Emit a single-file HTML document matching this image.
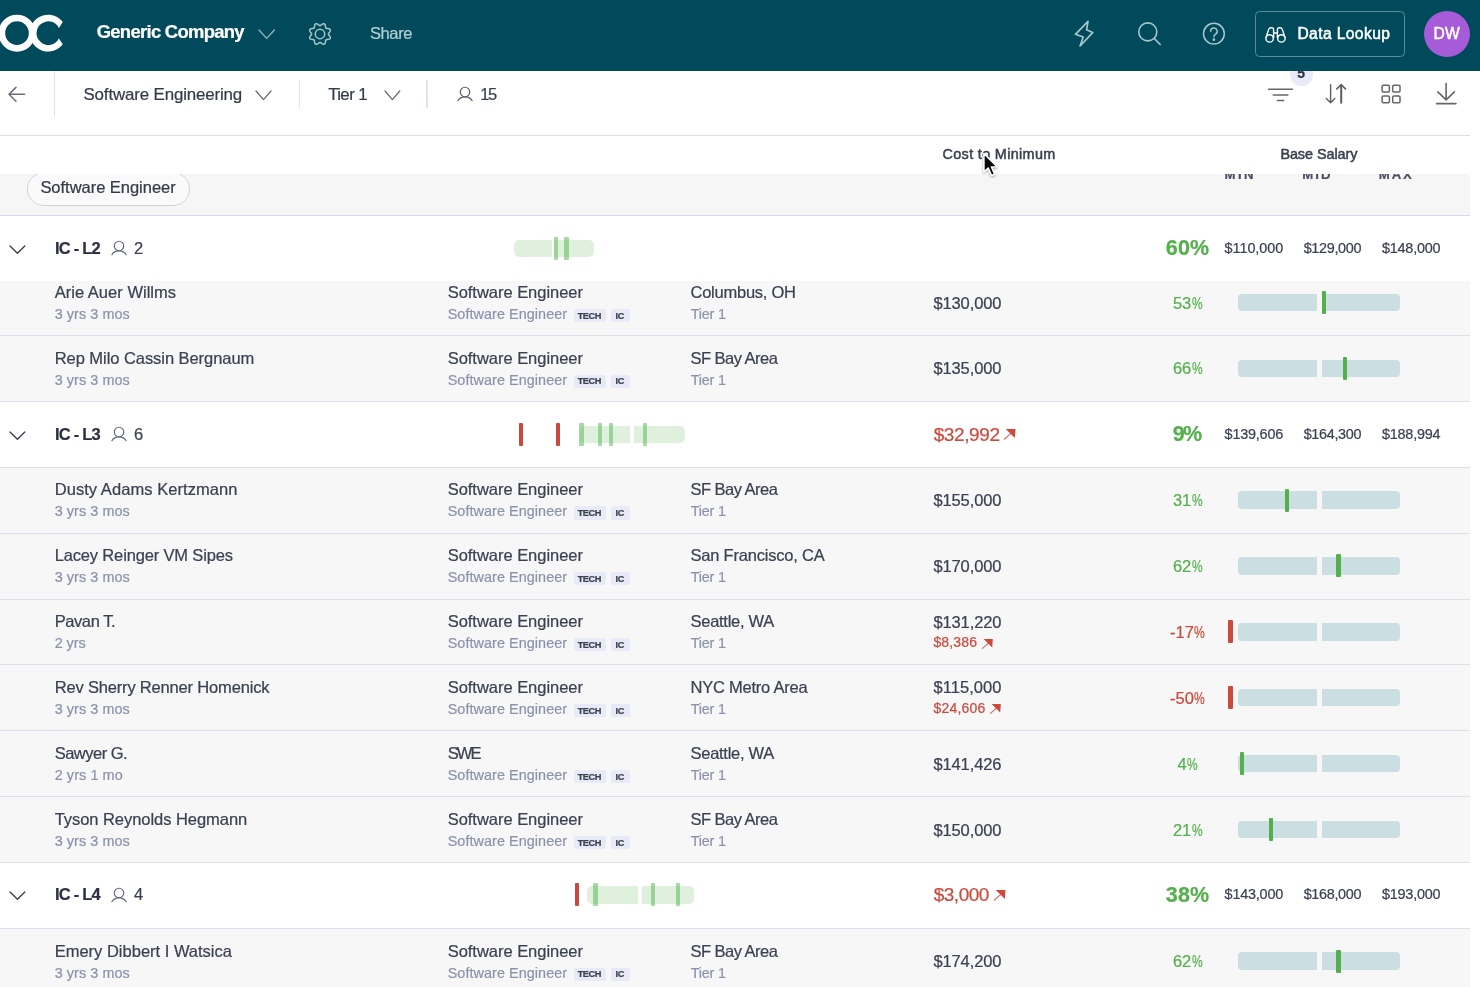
<!DOCTYPE html>
<html lang="en"><head><meta charset="utf-8"><title>Compensation bands</title>
<style>
html,body{margin:0;padding:0}
body{width:1480px;height:987px;overflow:hidden;background:#fff;position:relative;
 font-family:"Liberation Sans",sans-serif;color:#3a4151}
.t{position:absolute;white-space:nowrap;filter:blur(.3px);-webkit-text-stroke:.22px currentColor}
.pc{display:inline-block;font-style:normal;transform-origin:0 50%}
.a{position:absolute;display:block;overflow:visible}
.row,.grp{position:absolute;left:0;width:1470px;height:66px;box-sizing:border-box;border-bottom:1px solid #dde1ee}
.row{background:#f7f7f7}
.grp{background:#fff}
.grp.nb{border-bottom:0}
.tag{position:absolute;height:13.2px;background:#e8ebf7;border-radius:2px}
.bar{position:absolute;height:17.6px;background:#cbdee2}
.bl{left:1238.4px;width:78.6px;border-radius:4px 0 0 4px}
.br{left:1321.6px;width:78.6px;border-radius:0 4px 4px 0}
.mk{position:absolute;width:4.4px;height:23px;background:#54b04c;border-radius:1px}
.mk.neg{background:#cb4a3c;width:5px}
.rg{position:absolute;height:17.4px;background:#dff0dc}
.rt{position:absolute;width:4.1px;height:23.2px;background:#c94a3c;border-radius:1px}
.gt{position:absolute;width:4.4px;height:23.2px;background:rgba(96,188,96,.56);border-radius:1px}
#topbar{position:absolute;left:0;top:0;width:1480px;height:71px;background:#004a5b}
#toolbar{position:absolute;left:0;top:71px;width:1470px;height:64px;background:#fff;border-bottom:1px solid #dde1ee}
#thead{position:absolute;left:0;top:136px;width:1470px;height:38px;background:#fff}
#band{position:absolute;left:0;top:174px;width:1470px;height:42px;box-sizing:border-box;background:#f6f6f7;border-bottom:1px solid #d3d9e8;overflow:hidden}
.vd{position:absolute;width:1.4px;background:#dfe3f1}
.chip{position:absolute;left:27.2px;top:-2px;width:162.4px;height:33.7px;box-sizing:border-box;border:1px solid #d2d3d6;border-radius:17px;background:#fafafa}
.btn{position:absolute;left:1255.4px;top:11.2px;width:149.6px;height:45.4px;box-sizing:border-box;border:1px solid #5b8b97;border-radius:4.5px}
.av{position:absolute;left:1423.5px;top:10.6px;width:46.2px;height:46.2px;border-radius:50%;background:#a65bd9}
.badge{position:absolute;left:1289.6px;top:62.4px;width:23.4px;height:23.4px;border-radius:50%;background:#e8eaf7}
</style></head>
<body>
<main id="table"><div class="r"><div class="row" style="top:270px;height:66px"></div>
<span class="t" style="left:54.7px;top:283px;font-size:16.5px;line-height:18px;letter-spacing:0.025px;">Arie Auer Willms</span>
<span class="t" style="left:54.7px;top:306px;font-size:14.4px;line-height:16px;color:#8b93ab;letter-spacing:0.063px;">3 yrs 3 mos</span>
<span class="t" style="left:447.7px;top:283px;font-size:16.5px;line-height:18px;letter-spacing:-0.028px;">Software Engineer</span>
<span class="t" style="left:447.7px;top:306px;font-size:14.4px;line-height:16px;color:#8b93ab;letter-spacing:0.063px;">Software Engineer</span>
<span class="tag" style="left:573.5px;top:308.7px;width:32.7px"></span>
<span class="t" style="left:577.7px;top:311px;font-size:9.2px;line-height:10px;font-weight:700;letter-spacing:-0.437px;">TECH</span>
<span class="tag" style="left:610.5px;top:308.7px;width:19px"></span>
<span class="t" style="left:615.5px;top:311px;font-size:9.2px;line-height:10px;font-weight:700;letter-spacing:-0.288px;">IC</span>
<span class="t" style="left:690.5px;top:283px;font-size:16.5px;line-height:18px;letter-spacing:-0.246px;">Columbus, OH</span>
<span class="t" style="left:690.7px;top:306px;font-size:14.4px;line-height:16px;color:#8b93ab;letter-spacing:-0.210px;">Tier 1</span>
<span class="t" style="left:933.4px;top:294px;font-size:16.5px;line-height:18px;letter-spacing:-0.103px;">$130,000</span>
<span class="t" style="left:1172.9px;top:294px;font-size:16.5px;line-height:18px;color:#54b04c;">53<i class="pc" style="margin-left:0.4px;transform:scaleX(0.726)">%</i></span>
<span class="bar bl" style="top:293.6px"></span>
<span class="bar br" style="top:293.6px"></span>
<span class="mk" style="left:1321.9px;top:290.9px"></span>
</div>
<div class="r"><div class="row" style="top:336px;height:66px"></div>
<span class="t" style="left:54.7px;top:349px;font-size:16.5px;line-height:18px;letter-spacing:-0.054px;">Rep Milo Cassin Bergnaum</span>
<span class="t" style="left:54.7px;top:372px;font-size:14.4px;line-height:16px;color:#8b93ab;letter-spacing:0.063px;">3 yrs 3 mos</span>
<span class="t" style="left:447.7px;top:349px;font-size:16.5px;line-height:18px;letter-spacing:-0.028px;">Software Engineer</span>
<span class="t" style="left:447.7px;top:372px;font-size:14.4px;line-height:16px;color:#8b93ab;letter-spacing:0.063px;">Software Engineer</span>
<span class="tag" style="left:573.5px;top:374.6px;width:32.7px"></span>
<span class="t" style="left:577.7px;top:376px;font-size:9.2px;line-height:10px;font-weight:700;letter-spacing:-0.437px;">TECH</span>
<span class="tag" style="left:610.5px;top:374.6px;width:19px"></span>
<span class="t" style="left:615.5px;top:376px;font-size:9.2px;line-height:10px;font-weight:700;letter-spacing:-0.288px;">IC</span>
<span class="t" style="left:690.5px;top:349px;font-size:16.5px;line-height:18px;letter-spacing:-0.524px;">SF Bay Area</span>
<span class="t" style="left:690.7px;top:372px;font-size:14.4px;line-height:16px;color:#8b93ab;letter-spacing:-0.210px;">Tier 1</span>
<span class="t" style="left:933.4px;top:359px;font-size:16.5px;line-height:18px;letter-spacing:-0.103px;">$135,000</span>
<span class="t" style="left:1172.9px;top:359px;font-size:16.5px;line-height:18px;color:#54b04c;">66<i class="pc" style="margin-left:0.4px;transform:scaleX(0.726)">%</i></span>
<span class="bar bl" style="top:359.5px"></span>
<span class="bar br" style="top:359.5px"></span>
<span class="mk" style="left:1342.9px;top:356.8px"></span>
</div>
<div class="r g"><div class="grp" style="top:402px;height:66px"></div>
<svg class="a" style="left:7.9px;top:429.7px" width="18.8" height="11.3" viewBox="-2 -2 18.8 11.3"><path d="M0 0 L7.40 7.30 L14.80 0" fill="none" stroke="#3a4151" stroke-width="1.4" stroke-linecap="round" stroke-linejoin="round"/></svg>
<span class="t" style="left:54.9px;top:425px;font-size:16.5px;line-height:18px;font-weight:700;color:#2b3140;letter-spacing:-0.753px;">IC - L3</span>
<svg class="a" style="left:110.2px;top:424.3px" width="18" height="19" viewBox="110.20 424.28 18 19" fill="none" stroke="#666c7a" stroke-width="1.2" stroke-linecap="round"><circle cx="119.20" cy="432.28" r="4.75"/><path d="M112.10 441.08 Q114.20 437.18 119.20 437.18 Q124.20 437.18 126.30 441.08"/></svg>
<span class="t" style="left:133.9px;top:425px;font-size:16.5px;line-height:18px;">6</span>
<span class="t" style="left:933.7px;top:424px;font-size:19px;line-height:21px;color:#cb4a3c;letter-spacing:-0.397px;">$32,992</span>
<svg class="a" style="left:1004.3px;top:429.4px" width="11.5" height="10.4" viewBox="0 0 11.5 10.4"><path d="M1.7 0 L11.5 0 L10.9 9.1 Z" fill="#cb4a3c"/><path d="M0.5 10 L6.9 4.4" stroke="#cb4a3c" stroke-width="1.2" stroke-linecap="round" fill="none" opacity=".8"/></svg>
<span class="t" style="left:1172.7px;top:422px;font-size:21.5px;line-height:24px;font-weight:700;color:#54b04c;letter-spacing:-1.674px;">9%</span>
<span class="t" style="left:1224.6px;top:426px;font-size:14.4px;line-height:16px;letter-spacing:-0.203px;">$139,606</span>
<span class="t" style="left:1303.7px;top:426px;font-size:14.4px;line-height:16px;letter-spacing:-0.317px;">$164,300</span>
<span class="t" style="left:1381.9px;top:426px;font-size:14.4px;line-height:16px;letter-spacing:-0.189px;">$188,994</span>
<span class="rg" style="left:579.7px;top:425.8px;width:50.0px;border-radius:5px 0 0 5px"></span>
<span class="rg" style="left:634.2px;top:425.8px;width:50.7px;border-radius:0 5px 5px 0"></span>
<span class="rt" style="left:519.2px;top:422.8px"></span>
<span class="rt" style="left:556.4px;top:422.8px"></span>
<span class="gt" style="left:579.2px;top:422.8px"></span>
<span class="gt" style="left:598.0px;top:422.8px"></span>
<span class="gt" style="left:608.8px;top:422.8px"></span>
<span class="gt" style="left:642.6px;top:422.8px"></span>
</div>
<div class="r"><div class="row" style="top:468px;height:66px"></div>
<span class="t" style="left:54.7px;top:480px;font-size:16.5px;line-height:18px;letter-spacing:0.056px;">Dusty Adams Kertzmann</span>
<span class="t" style="left:54.7px;top:503px;font-size:14.4px;line-height:16px;color:#8b93ab;letter-spacing:0.063px;">3 yrs 3 mos</span>
<span class="t" style="left:447.7px;top:480px;font-size:16.5px;line-height:18px;letter-spacing:-0.028px;">Software Engineer</span>
<span class="t" style="left:447.7px;top:503px;font-size:14.4px;line-height:16px;color:#8b93ab;letter-spacing:0.063px;">Software Engineer</span>
<span class="tag" style="left:573.5px;top:506.4px;width:32.7px"></span>
<span class="t" style="left:577.7px;top:508px;font-size:9.2px;line-height:10px;font-weight:700;letter-spacing:-0.437px;">TECH</span>
<span class="tag" style="left:610.5px;top:506.4px;width:19px"></span>
<span class="t" style="left:615.5px;top:508px;font-size:9.2px;line-height:10px;font-weight:700;letter-spacing:-0.288px;">IC</span>
<span class="t" style="left:690.5px;top:480px;font-size:16.5px;line-height:18px;letter-spacing:-0.524px;">SF Bay Area</span>
<span class="t" style="left:690.7px;top:503px;font-size:14.4px;line-height:16px;color:#8b93ab;letter-spacing:-0.210px;">Tier 1</span>
<span class="t" style="left:933.4px;top:491px;font-size:16.5px;line-height:18px;letter-spacing:-0.103px;">$155,000</span>
<span class="t" style="left:1172.9px;top:491px;font-size:16.5px;line-height:18px;color:#54b04c;">31<i class="pc" style="margin-left:0.4px;transform:scaleX(0.726)">%</i></span>
<span class="bar bl" style="top:491.3px"></span>
<span class="bar br" style="top:491.3px"></span>
<span class="mk" style="left:1285.1px;top:488.6px"></span>
</div>
<div class="r"><div class="row" style="top:534px;height:66px"></div>
<span class="t" style="left:54.7px;top:546px;font-size:16.5px;line-height:18px;letter-spacing:-0.157px;">Lacey Reinger VM Sipes</span>
<span class="t" style="left:54.7px;top:569px;font-size:14.4px;line-height:16px;color:#8b93ab;letter-spacing:0.063px;">3 yrs 3 mos</span>
<span class="t" style="left:447.7px;top:546px;font-size:16.5px;line-height:18px;letter-spacing:-0.028px;">Software Engineer</span>
<span class="t" style="left:447.7px;top:569px;font-size:14.4px;line-height:16px;color:#8b93ab;letter-spacing:0.063px;">Software Engineer</span>
<span class="tag" style="left:573.5px;top:572.2px;width:32.7px"></span>
<span class="t" style="left:577.7px;top:574px;font-size:9.2px;line-height:10px;font-weight:700;letter-spacing:-0.437px;">TECH</span>
<span class="tag" style="left:610.5px;top:572.2px;width:19px"></span>
<span class="t" style="left:615.5px;top:574px;font-size:9.2px;line-height:10px;font-weight:700;letter-spacing:-0.288px;">IC</span>
<span class="t" style="left:690.5px;top:546px;font-size:16.5px;line-height:18px;letter-spacing:-0.209px;">San Francisco, CA</span>
<span class="t" style="left:690.7px;top:569px;font-size:14.4px;line-height:16px;color:#8b93ab;letter-spacing:-0.210px;">Tier 1</span>
<span class="t" style="left:933.4px;top:557px;font-size:16.5px;line-height:18px;letter-spacing:-0.103px;">$170,000</span>
<span class="t" style="left:1172.9px;top:557px;font-size:16.5px;line-height:18px;color:#54b04c;">62<i class="pc" style="margin-left:0.4px;transform:scaleX(0.726)">%</i></span>
<span class="bar bl" style="top:557.1px"></span>
<span class="bar br" style="top:557.1px"></span>
<span class="mk" style="left:1336.4px;top:554.4px"></span>
</div>
<div class="r"><div class="row" style="top:600px;height:65px"></div>
<span class="t" style="left:54.7px;top:612px;font-size:16.5px;line-height:18px;letter-spacing:-0.415px;">Pavan T.</span>
<span class="t" style="left:54.7px;top:635px;font-size:14.4px;line-height:16px;color:#8b93ab;letter-spacing:-0.071px;">2 yrs</span>
<span class="t" style="left:447.7px;top:612px;font-size:16.5px;line-height:18px;letter-spacing:-0.028px;">Software Engineer</span>
<span class="t" style="left:447.7px;top:635px;font-size:14.4px;line-height:16px;color:#8b93ab;letter-spacing:0.063px;">Software Engineer</span>
<span class="tag" style="left:573.5px;top:638.1px;width:32.7px"></span>
<span class="t" style="left:577.7px;top:640px;font-size:9.2px;line-height:10px;font-weight:700;letter-spacing:-0.437px;">TECH</span>
<span class="tag" style="left:610.5px;top:638.1px;width:19px"></span>
<span class="t" style="left:615.5px;top:640px;font-size:9.2px;line-height:10px;font-weight:700;letter-spacing:-0.288px;">IC</span>
<span class="t" style="left:690.5px;top:612px;font-size:16.5px;line-height:18px;letter-spacing:-0.270px;">Seattle, WA</span>
<span class="t" style="left:690.7px;top:635px;font-size:14.4px;line-height:16px;color:#8b93ab;letter-spacing:-0.210px;">Tier 1</span>
<span class="t" style="left:933.4px;top:613px;font-size:16.5px;line-height:18px;letter-spacing:-0.103px;">$131,220</span>
<span class="t" style="left:933.4px;top:634px;font-size:14.0px;line-height:16px;color:#cb4a3c;letter-spacing:0.156px;">$8,386</span>
<svg class="a" style="left:981.8px;top:638.5px" width="10.8" height="9.8" viewBox="0 0 11.5 10.4"><path d="M1.7 0 L11.5 0 L10.9 9.1 Z" fill="#cb4a3c"/><path d="M0.5 10 L6.9 4.4" stroke="#cb4a3c" stroke-width="1.2" stroke-linecap="round" fill="none" opacity=".8"/></svg>
<span class="t" style="left:1170.1px;top:623px;font-size:16.5px;line-height:18px;color:#cb4a3c;">-17<i class="pc" style="margin-left:0.4px;transform:scaleX(0.733)">%</i></span>
<span class="bar bl" style="top:623.0px"></span>
<span class="bar br" style="top:623.0px"></span>
<span class="mk neg" style="left:1228.4px;top:620.3px"></span>
</div>
<div class="r"><div class="row" style="top:665px;height:66px"></div>
<span class="t" style="left:54.7px;top:678px;font-size:16.5px;line-height:18px;letter-spacing:-0.175px;">Rev Sherry Renner Homenick</span>
<span class="t" style="left:54.7px;top:701px;font-size:14.4px;line-height:16px;color:#8b93ab;letter-spacing:0.063px;">3 yrs 3 mos</span>
<span class="t" style="left:447.7px;top:678px;font-size:16.5px;line-height:18px;letter-spacing:-0.028px;">Software Engineer</span>
<span class="t" style="left:447.7px;top:701px;font-size:14.4px;line-height:16px;color:#8b93ab;letter-spacing:0.063px;">Software Engineer</span>
<span class="tag" style="left:573.5px;top:704.0px;width:32.7px"></span>
<span class="t" style="left:577.7px;top:706px;font-size:9.2px;line-height:10px;font-weight:700;letter-spacing:-0.437px;">TECH</span>
<span class="tag" style="left:610.5px;top:704.0px;width:19px"></span>
<span class="t" style="left:615.5px;top:706px;font-size:9.2px;line-height:10px;font-weight:700;letter-spacing:-0.288px;">IC</span>
<span class="t" style="left:690.5px;top:678px;font-size:16.5px;line-height:18px;letter-spacing:-0.226px;">NYC Metro Area</span>
<span class="t" style="left:690.7px;top:701px;font-size:14.4px;line-height:16px;color:#8b93ab;letter-spacing:-0.210px;">Tier 1</span>
<span class="t" style="left:933.4px;top:678px;font-size:16.5px;line-height:18px;letter-spacing:0.072px;">$115,000</span>
<span class="t" style="left:933.4px;top:700px;font-size:14.0px;line-height:16px;color:#cb4a3c;letter-spacing:0.232px;">$24,606</span>
<svg class="a" style="left:990.2px;top:704.4px" width="10.8" height="9.8" viewBox="0 0 11.5 10.4"><path d="M1.7 0 L11.5 0 L10.9 9.1 Z" fill="#cb4a3c"/><path d="M0.5 10 L6.9 4.4" stroke="#cb4a3c" stroke-width="1.2" stroke-linecap="round" fill="none" opacity=".8"/></svg>
<span class="t" style="left:1170.1px;top:689px;font-size:16.5px;line-height:18px;color:#cb4a3c;">-50<i class="pc" style="margin-left:0.4px;transform:scaleX(0.733)">%</i></span>
<span class="bar bl" style="top:688.9px"></span>
<span class="bar br" style="top:688.9px"></span>
<span class="mk neg" style="left:1228.4px;top:686.2px"></span>
</div>
<div class="r"><div class="row" style="top:731px;height:66px"></div>
<span class="t" style="left:54.7px;top:744px;font-size:16.5px;line-height:18px;letter-spacing:-0.515px;">Sawyer G.</span>
<span class="t" style="left:54.7px;top:767px;font-size:14.4px;line-height:16px;color:#8b93ab;letter-spacing:0.092px;">2 yrs 1 mo</span>
<span class="t" style="left:447.7px;top:744px;font-size:16.5px;line-height:18px;letter-spacing:-1.892px;">SWE</span>
<span class="t" style="left:447.7px;top:767px;font-size:14.4px;line-height:16px;color:#8b93ab;letter-spacing:0.063px;">Software Engineer</span>
<span class="tag" style="left:573.5px;top:769.9px;width:32.7px"></span>
<span class="t" style="left:577.7px;top:772px;font-size:9.2px;line-height:10px;font-weight:700;letter-spacing:-0.437px;">TECH</span>
<span class="tag" style="left:610.5px;top:769.9px;width:19px"></span>
<span class="t" style="left:615.5px;top:772px;font-size:9.2px;line-height:10px;font-weight:700;letter-spacing:-0.288px;">IC</span>
<span class="t" style="left:690.5px;top:744px;font-size:16.5px;line-height:18px;letter-spacing:-0.270px;">Seattle, WA</span>
<span class="t" style="left:690.7px;top:767px;font-size:14.4px;line-height:16px;color:#8b93ab;letter-spacing:-0.210px;">Tier 1</span>
<span class="t" style="left:933.4px;top:755px;font-size:16.5px;line-height:18px;letter-spacing:-0.103px;">$141,426</span>
<span class="t" style="left:1177.5px;top:755px;font-size:16.5px;line-height:18px;color:#54b04c;">4<i class="pc" style="margin-left:0.4px;transform:scaleX(0.724)">%</i></span>
<span class="bar bl" style="top:754.8px"></span>
<span class="bar br" style="top:754.8px"></span>
<span class="mk" style="left:1240.1px;top:752.1px"></span>
</div>
<div class="r"><div class="row" style="top:797px;height:66px"></div>
<span class="t" style="left:54.7px;top:810px;font-size:16.5px;line-height:18px;letter-spacing:-0.049px;">Tyson Reynolds Hegmann</span>
<span class="t" style="left:54.7px;top:833px;font-size:14.4px;line-height:16px;color:#8b93ab;letter-spacing:0.063px;">3 yrs 3 mos</span>
<span class="t" style="left:447.7px;top:810px;font-size:16.5px;line-height:18px;letter-spacing:-0.028px;">Software Engineer</span>
<span class="t" style="left:447.7px;top:833px;font-size:14.4px;line-height:16px;color:#8b93ab;letter-spacing:0.063px;">Software Engineer</span>
<span class="tag" style="left:573.5px;top:835.8px;width:32.7px"></span>
<span class="t" style="left:577.7px;top:838px;font-size:9.2px;line-height:10px;font-weight:700;letter-spacing:-0.437px;">TECH</span>
<span class="tag" style="left:610.5px;top:835.8px;width:19px"></span>
<span class="t" style="left:615.5px;top:838px;font-size:9.2px;line-height:10px;font-weight:700;letter-spacing:-0.288px;">IC</span>
<span class="t" style="left:690.5px;top:810px;font-size:16.5px;line-height:18px;letter-spacing:-0.524px;">SF Bay Area</span>
<span class="t" style="left:690.7px;top:833px;font-size:14.4px;line-height:16px;color:#8b93ab;letter-spacing:-0.210px;">Tier 1</span>
<span class="t" style="left:933.4px;top:821px;font-size:16.5px;line-height:18px;letter-spacing:-0.103px;">$150,000</span>
<span class="t" style="left:1172.9px;top:821px;font-size:16.5px;line-height:18px;color:#54b04c;">21<i class="pc" style="margin-left:0.4px;transform:scaleX(0.726)">%</i></span>
<span class="bar bl" style="top:820.7px"></span>
<span class="bar br" style="top:820.7px"></span>
<span class="mk" style="left:1268.7px;top:818.0px"></span>
</div>
<div class="r g"><div class="grp" style="top:863px;height:66px"></div>
<svg class="a" style="left:7.9px;top:890.2px" width="18.8" height="11.3" viewBox="-2 -2 18.8 11.3"><path d="M0 0 L7.40 7.30 L14.80 0" fill="none" stroke="#3a4151" stroke-width="1.4" stroke-linecap="round" stroke-linejoin="round"/></svg>
<span class="t" style="left:54.9px;top:885px;font-size:16.5px;line-height:18px;font-weight:700;color:#2b3140;letter-spacing:-0.753px;">IC - L4</span>
<svg class="a" style="left:110.2px;top:884.8px" width="18" height="19" viewBox="110.20 884.84 18 19" fill="none" stroke="#666c7a" stroke-width="1.2" stroke-linecap="round"><circle cx="119.20" cy="892.84" r="4.75"/><path d="M112.10 901.64 Q114.20 897.74 119.20 897.74 Q124.20 897.74 126.30 901.64"/></svg>
<span class="t" style="left:133.9px;top:885px;font-size:16.5px;line-height:18px;">4</span>
<span class="t" style="left:933.7px;top:884px;font-size:19px;line-height:21px;color:#cb4a3c;letter-spacing:-0.483px;">$3,000</span>
<svg class="a" style="left:993.7px;top:889.9px" width="11.5" height="10.4" viewBox="0 0 11.5 10.4"><path d="M1.7 0 L11.5 0 L10.9 9.1 Z" fill="#cb4a3c"/><path d="M0.5 10 L6.9 4.4" stroke="#cb4a3c" stroke-width="1.2" stroke-linecap="round" fill="none" opacity=".8"/></svg>
<span class="t" style="left:1165.7px;top:883px;font-size:21.5px;line-height:24px;font-weight:700;color:#54b04c;letter-spacing:0.234px;">38%</span>
<span class="t" style="left:1224.6px;top:886px;font-size:14.4px;line-height:16px;letter-spacing:-0.203px;">$143,000</span>
<span class="t" style="left:1303.7px;top:886px;font-size:14.4px;line-height:16px;letter-spacing:-0.317px;">$168,000</span>
<span class="t" style="left:1381.9px;top:886px;font-size:14.4px;line-height:16px;letter-spacing:-0.189px;">$193,000</span>
<span class="rg" style="left:586.9px;top:886.3px;width:51.3px;border-radius:5px 0 0 5px"></span>
<span class="rg" style="left:642.2px;top:886.3px;width:52.0px;border-radius:0 5px 5px 0"></span>
<span class="rt" style="left:575.3px;top:883.3px"></span>
<span class="gt" style="left:593.4px;top:883.3px"></span>
<span class="gt" style="left:651.0px;top:883.3px"></span>
<span class="gt" style="left:676.0px;top:883.3px"></span>
</div>
<div class="r"><div class="row" style="top:929px;height:66px"></div>
<span class="t" style="left:54.7px;top:942px;font-size:16.5px;line-height:18px;">Emery Dibbert I Watsica</span>
<span class="t" style="left:54.7px;top:965px;font-size:14.4px;line-height:16px;color:#8b93ab;letter-spacing:0.063px;">3 yrs 3 mos</span>
<span class="t" style="left:447.7px;top:942px;font-size:16.5px;line-height:18px;letter-spacing:-0.028px;">Software Engineer</span>
<span class="t" style="left:447.7px;top:965px;font-size:14.4px;line-height:16px;color:#8b93ab;letter-spacing:0.063px;">Software Engineer</span>
<span class="tag" style="left:573.5px;top:967.5px;width:32.7px"></span>
<span class="t" style="left:577.7px;top:969px;font-size:9.2px;line-height:10px;font-weight:700;letter-spacing:-0.437px;">TECH</span>
<span class="tag" style="left:610.5px;top:967.5px;width:19px"></span>
<span class="t" style="left:615.5px;top:969px;font-size:9.2px;line-height:10px;font-weight:700;letter-spacing:-0.288px;">IC</span>
<span class="t" style="left:690.5px;top:942px;font-size:16.5px;line-height:18px;letter-spacing:-0.524px;">SF Bay Area</span>
<span class="t" style="left:690.7px;top:965px;font-size:14.4px;line-height:16px;color:#8b93ab;letter-spacing:-0.210px;">Tier 1</span>
<span class="t" style="left:933.4px;top:952px;font-size:16.5px;line-height:18px;letter-spacing:-0.103px;">$174,200</span>
<span class="t" style="left:1172.9px;top:952px;font-size:16.5px;line-height:18px;color:#54b04c;">62<i class="pc" style="margin-left:0.4px;transform:scaleX(0.726)">%</i></span>
<span class="bar bl" style="top:952.4px"></span>
<span class="bar br" style="top:952.4px"></span>
<span class="mk" style="left:1336.4px;top:949.7px"></span>
</div>
</main>
<section id="sticky"><div class="grp nb" style="top:216px;height:64.6px"></div>
<div class="r g"><svg class="a" style="left:7.9px;top:243.8px" width="18.8" height="11.3" viewBox="-2 -2 18.8 11.3"><path d="M0 0 L7.40 7.30 L14.80 0" fill="none" stroke="#3a4151" stroke-width="1.4" stroke-linecap="round" stroke-linejoin="round"/></svg>
<span class="t" style="left:54.9px;top:239px;font-size:16.5px;line-height:18px;font-weight:700;color:#2b3140;letter-spacing:-0.753px;">IC - L2</span>
<svg class="a" style="left:110.2px;top:238.4px" width="18" height="19" viewBox="110.20 238.40 18 19" fill="none" stroke="#666c7a" stroke-width="1.2" stroke-linecap="round"><circle cx="119.20" cy="246.40" r="4.75"/><path d="M112.10 255.20 Q114.20 251.30 119.20 251.30 Q124.20 251.30 126.30 255.20"/></svg>
<span class="t" style="left:133.9px;top:239px;font-size:16.5px;line-height:18px;">2</span>
<span class="t" style="left:1165.7px;top:236px;font-size:21.5px;line-height:24px;font-weight:700;color:#54b04c;letter-spacing:0.234px;">60%</span>
<span class="t" style="left:1224.6px;top:240px;font-size:14.4px;line-height:16px;letter-spacing:-0.050px;">$110,000</span>
<span class="t" style="left:1303.7px;top:240px;font-size:14.4px;line-height:16px;letter-spacing:-0.317px;">$129,000</span>
<span class="t" style="left:1381.9px;top:240px;font-size:14.4px;line-height:16px;letter-spacing:-0.189px;">$148,000</span>
<span class="rg" style="left:513.9px;top:239.9px;width:38.1px;border-radius:5px 0 0 5px"></span>
<span class="rg" style="left:553.8px;top:239.9px;width:39.8px;border-radius:0 5px 5px 0"></span>
<span class="gt" style="left:553.6px;top:236.9px"></span>
<span class="gt" style="left:564.4px;top:236.9px"></span>
</div>
<div id="band"><div class="chip"></div>
</div><span class="t" style="left:40.4px;top:178px;font-size:16.5px;line-height:18px;color:#333a48;letter-spacing:-0.028px;">Software Engineer</span>
<span class="t" style="left:1224.6px;top:167px;font-size:13.2px;line-height:15px;font-weight:700;color:#4a5060;letter-spacing:2.364px;">MIN</span>
<span class="t" style="left:1302.2px;top:167px;font-size:13.2px;line-height:15px;font-weight:700;color:#4a5060;letter-spacing:2.064px;">MID</span>
<span class="t" style="left:1378.8px;top:167px;font-size:13.2px;line-height:15px;font-weight:700;color:#4a5060;letter-spacing:1.898px;">MAX</span>
<div id="thead"></div>
<span class="t" style="left:942.5px;top:146px;font-size:14.4px;line-height:16px;color:#394050;letter-spacing:0.346px;-webkit-text-stroke:0.5px #394050;">Cost to Minimum</span>
<span class="t" style="left:1280.4px;top:146px;font-size:14.4px;line-height:16px;color:#394050;letter-spacing:-0.059px;-webkit-text-stroke:0.5px #394050;">Base Salary</span>
</section>
<nav id="filters"><div id="toolbar"></div>
<svg class="a" style="left:6px;top:84px" width="22" height="20" viewBox="6 84 22 20" fill="none" stroke="#6a6e78" stroke-width="1.5" stroke-linecap="round" stroke-linejoin="round"><path d="M24.6 94.3 H9.2 M16 87.4 L9 94.3 L16 101.2"/></svg>
<span class="vd" style="left:53.8px;top:71px;height:46px"></span>
<span class="t" style="left:83.5px;top:85px;font-size:16.9px;line-height:19px;color:#333a48;letter-spacing:-0.147px;">Software Engineering</span>
<svg class="a" style="left:254.2px;top:88.8px" width="19.0" height="12.6" viewBox="-2 -2 19.0 12.6"><path d="M0 0 L7.50 8.60 L15.00 0" fill="none" stroke="#666b76" stroke-width="1.3" stroke-linecap="round" stroke-linejoin="round"/></svg>
<span class="vd" style="left:298.6px;top:80px;height:28px"></span>
<span class="t" style="left:328.2px;top:85px;font-size:16.9px;line-height:19px;color:#333a48;letter-spacing:-0.630px;">Tier 1</span>
<svg class="a" style="left:382.8px;top:88.8px" width="18.8" height="12.6" viewBox="-2 -2 18.8 12.6"><path d="M0 0 L7.40 8.60 L14.80 0" fill="none" stroke="#666b76" stroke-width="1.3" stroke-linecap="round" stroke-linejoin="round"/></svg>
<span class="vd" style="left:426.4px;top:80px;height:28px"></span>
<svg class="a" style="left:456.3px;top:84.3px" width="18" height="19" viewBox="456.30 84.30 18 19" fill="none" stroke="#596070" stroke-width="1.2" stroke-linecap="round"><circle cx="465.30" cy="92.30" r="4.75"/><path d="M458.20 101.10 Q460.30 97.20 465.30 97.20 Q470.30 97.20 472.40 101.10"/></svg>
<span class="t" style="left:480.3px;top:85px;font-size:16.5px;line-height:18px;letter-spacing:-1.353px;">15</span>
<span class="badge"></span>
<span class="t" style="left:1297.3px;top:65px;font-size:14px;line-height:16px;font-weight:700;color:#2b3140;">5</span>
<svg class="a" style="left:1266px;top:86px" width="30" height="18" viewBox="1266 86 30 18" fill="none" stroke="#666" stroke-width="1.5" stroke-linecap="round"><path d="M1268.6 89.2 H1292.4 M1273.2 95 H1287.9 M1277.4 100.5 H1283.7"/></svg>
<svg class="a" style="left:1323px;top:82px" width="26" height="24" viewBox="1323 82 26 24" fill="none" stroke="#5f5f5f" stroke-linecap="round" stroke-linejoin="round"><path d="M1330.6 84.8 V102.6 M1326.3 98.6 L1330.6 102.8 L1334.8 98.6" stroke-width="1.4"/><path d="M1341.2 102.8 V85 " stroke-width="2"/><path d="M1336.8 88.9 L1341.2 84.6 L1345.5 88.9" stroke-width="1.5"/></svg>
<svg class="a" style="left:1379px;top:82px" width="24" height="24" viewBox="1379 82 24 24" fill="none" stroke="#666" stroke-width="1.5"><rect x="1382.1" y="85.2" width="7.3" height="6.8" rx="1.2"/><rect x="1392.7" y="85.2" width="7.3" height="6.8" rx="1.2"/><rect x="1382.1" y="95.9" width="7.3" height="6.8" rx="1.2"/><rect x="1392.7" y="95.9" width="7.3" height="6.8" rx="1.2"/></svg>
<svg class="a" style="left:1434px;top:81px" width="25" height="25" viewBox="1434 81 25 25" fill="none" stroke="#666" stroke-width="1.6" stroke-linecap="round" stroke-linejoin="round"><path d="M1446.1 83.6 V99.4 M1437.8 91.8 L1446.1 99.8 L1454.4 91.8 M1436.6 103.6 H1456"/></svg>
</nav>
<header><div id="topbar"></div>
<svg class="a" style="left:0;top:10px" width="70" height="48" viewBox="0 10 70 48"><circle cx="17" cy="33.15" r="15.15" fill="none" stroke="#fff" stroke-width="6.7"/><path d="M62.8 21.95 A18.45 18.45 0 1 0 62.8 44.35 L58.87 38.42 A11.8 11.8 0 1 1 58.87 27.88 Z" fill="#fff"/></svg>
<span class="t" style="left:96.7px;top:21px;font-size:18.4px;line-height:21px;font-weight:700;color:#fff;letter-spacing:-0.678px;">Generic Company</span>
<svg class="a" style="left:256.9px;top:28.4px" width="19.4" height="12.4" viewBox="-2 -2 19.4 12.4"><path d="M0 0 L7.70 8.40 L15.40 0" fill="none" stroke="#8db2bb" stroke-width="1.4" stroke-linecap="round" stroke-linejoin="round"/></svg>
<svg class="a" style="left:305.5px;top:19.7px" width="28" height="28" viewBox="305.50 19.70 28 28" fill="none" stroke="#a6c6cd" stroke-width="1.5" stroke-linejoin="round"><path d="M327.90 33.70 L328.01 34.15 L328.30 34.62 L328.72 35.16 L329.17 35.76 L329.57 36.40 L329.81 37.05 L329.84 37.67 L329.61 38.20 L329.16 38.62 L328.53 38.91 L327.80 39.09 L327.05 39.19 L326.38 39.27 L325.83 39.40 L325.44 39.64 L325.20 40.03 L325.07 40.58 L324.99 41.25 L324.89 42.00 L324.71 42.73 L324.42 43.36 L324.00 43.81 L323.47 44.04 L322.85 44.01 L322.20 43.77 L321.56 43.37 L320.96 42.92 L320.42 42.50 L319.95 42.21 L319.50 42.10 L319.05 42.21 L318.58 42.50 L318.04 42.92 L317.44 43.37 L316.80 43.77 L316.15 44.01 L315.53 44.04 L315.00 43.81 L314.58 43.36 L314.29 42.73 L314.11 42.00 L314.01 41.25 L313.93 40.58 L313.80 40.03 L313.56 39.64 L313.17 39.40 L312.62 39.27 L311.95 39.19 L311.20 39.09 L310.47 38.91 L309.84 38.62 L309.39 38.20 L309.16 37.67 L309.19 37.05 L309.43 36.40 L309.83 35.76 L310.28 35.16 L310.70 34.62 L310.99 34.15 L311.10 33.70 L310.99 33.25 L310.70 32.78 L310.28 32.24 L309.83 31.64 L309.43 31.00 L309.19 30.35 L309.16 29.73 L309.39 29.20 L309.84 28.78 L310.47 28.49 L311.20 28.31 L311.95 28.21 L312.62 28.13 L313.17 28.00 L313.56 27.76 L313.80 27.37 L313.93 26.82 L314.01 26.15 L314.11 25.40 L314.29 24.67 L314.58 24.04 L315.00 23.59 L315.53 23.36 L316.15 23.39 L316.80 23.63 L317.44 24.03 L318.04 24.48 L318.58 24.90 L319.05 25.19 L319.50 25.30 L319.95 25.19 L320.42 24.90 L320.96 24.48 L321.56 24.03 L322.20 23.63 L322.85 23.39 L323.47 23.36 L324.00 23.59 L324.42 24.04 L324.71 24.67 L324.89 25.40 L324.99 26.15 L325.07 26.82 L325.20 27.37 L325.44 27.76 L325.83 28.00 L326.38 28.13 L327.05 28.21 L327.80 28.31 L328.53 28.49 L329.16 28.78 L329.61 29.20 L329.84 29.73 L329.81 30.35 L329.57 31.00 L329.17 31.64 L328.72 32.24 L328.30 32.78 L328.01 33.25 Z"/><circle cx="319.5" cy="33.7" r="4.7"/></svg>
<span class="t" style="left:370.0px;top:24px;font-size:16.5px;line-height:18px;color:#b4cfd5;letter-spacing:-0.407px;">Share</span>
<svg class="a" style="left:1070px;top:18px" width="28" height="32" viewBox="1070 18 28 32" fill="none" stroke="#a6c6cd" stroke-width="1.7" stroke-linejoin="round"><path d="M1088 21.4 L1075.4 34.3 L1083.2 37 L1080.1 46 L1092.7 32.6 L1086.6 29.8 Z"/></svg>
<svg class="a" style="left:1135px;top:19px" width="30" height="30" viewBox="1135 19 30 30" fill="none" stroke="#a6c6cd" stroke-width="1.6" stroke-linecap="round"><circle cx="1147.8" cy="31.9" r="9"/><path d="M1154.4 38.6 L1160.2 44.5"/></svg>
<svg class="a" style="left:1200px;top:20px" width="28" height="28" viewBox="1200 20 28 28" fill="none" stroke="#a6c6cd" stroke-width="1.5" stroke-linecap="round"><circle cx="1213.9" cy="33.7" r="10.4"/><path d="M1210.6 31.2 a3.3 3.3 0 1 1 4.9 2.9 c-1.1 0.7 -1.6 1.2 -1.6 2.6"/><circle cx="1213.9" cy="39.7" r="0.6" fill="#a6c6cd"/></svg>
<span class="btn"></span>
<svg class="a" style="left:1265.2px;top:26.8px" width="21" height="16" viewBox="0 0 21 16" fill="none" stroke="#fff" stroke-width="1.4" stroke-linejoin="round"><circle cx="4.6" cy="11.4" r="3.7"/><circle cx="16.4" cy="11.4" r="3.7"/><path d="M1 10.6 L3.6 2.6 Q4.2 0.8 6 0.8 H7 Q8.6 0.8 8.6 2.6 V11 M20 10.6 L17.4 2.6 Q16.8 0.8 15 0.8 H14 Q12.4 0.8 12.4 2.6 V11 M8.6 6 H12.4"/></svg>
<span class="t" style="left:1297.4px;top:25px;font-size:15.6px;line-height:17px;color:#fff;letter-spacing:0.407px;-webkit-text-stroke:0.5px #fff;">Data Lookup</span>
<span class="av"></span>
<span class="t" style="left:1433.4px;top:25px;font-size:15.6px;line-height:17px;color:#fff;letter-spacing:0.421px;-webkit-text-stroke:0.5px #fff;">DW</span>
</header>
<svg class="a" style="left:980px;top:150px;filter:drop-shadow(0.5px 1px 1px rgba(0,0,0,.35))" width="22" height="28" viewBox="-3.7 -3.3 20.9 26.6"><path d="M0 0 V17.6 L4.1 13.9 L7.3 20.9 L10.2 19.7 L7.2 12.8 L12.6 12.6 Z" fill="#0a0a0a" stroke="#fff" stroke-width="1.5" stroke-linejoin="round"/></svg>
</body></html>
